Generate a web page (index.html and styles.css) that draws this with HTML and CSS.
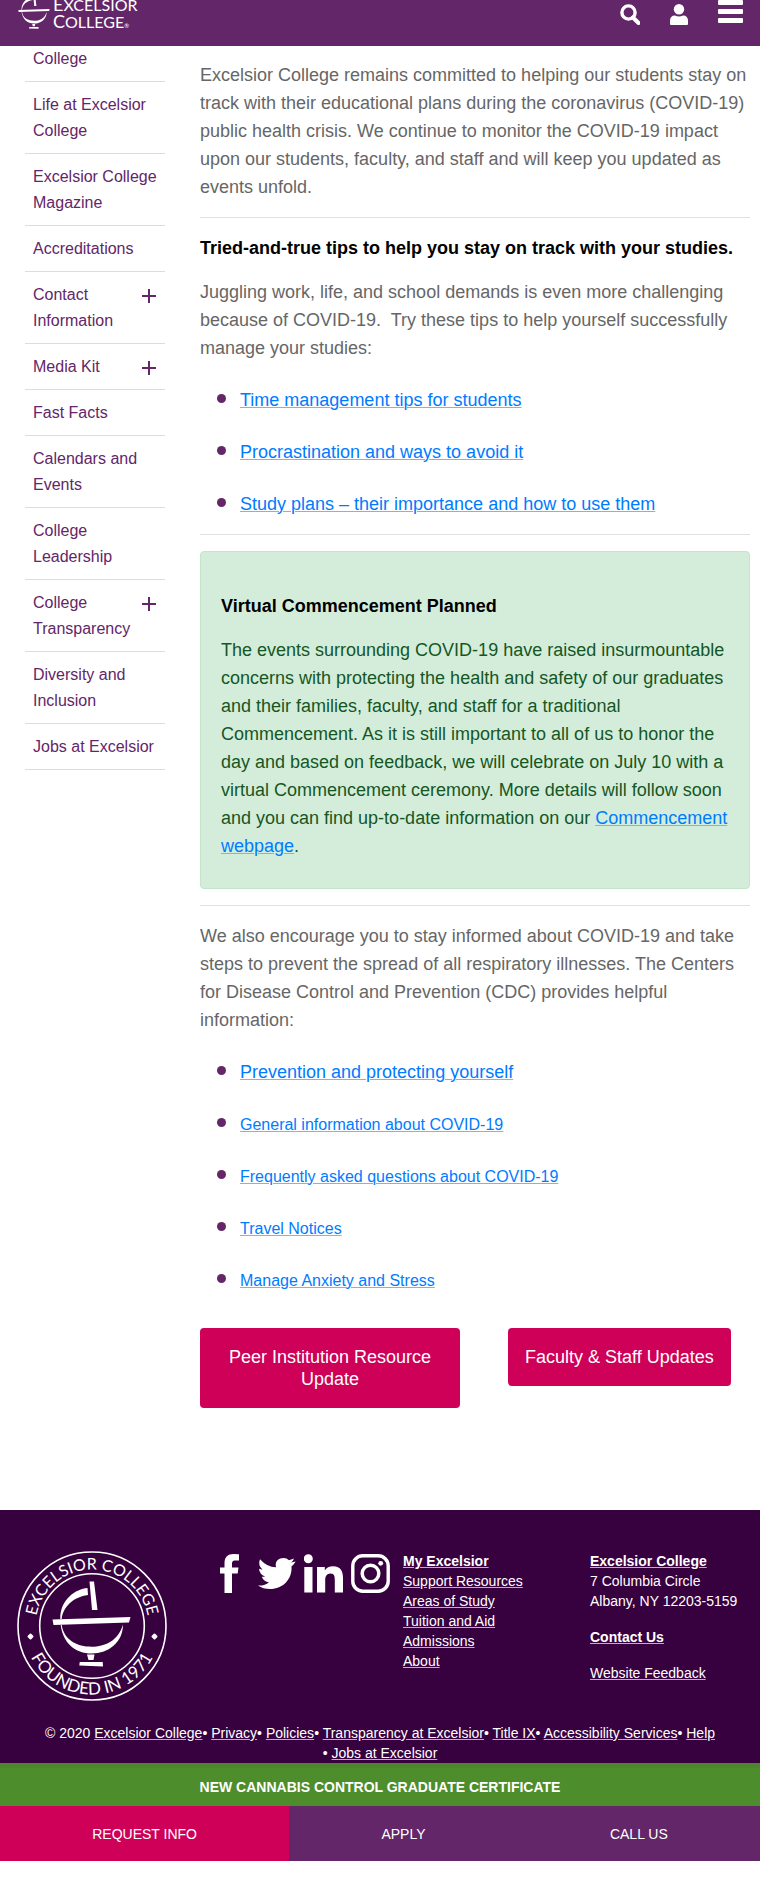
FILE: index.html
```html
<!DOCTYPE html>
<html lang="en">
<head>
<meta charset="utf-8">
<meta name="viewport" content="width=device-width, initial-scale=1">
<title>COVID-19 Updates | Excelsior College</title>
<link rel="stylesheet" href="styles.css">
</head>
<body>
<svg class="defs" width="0" height="0" aria-hidden="true">
  <symbol id="lamp" viewBox="35 29 79 87">
    <path d="M72.500 30.500L77 30.500L80.500 59L75 59ZM35.500 68.500L113.500 66L112 71.500L36.500 74ZM70.500 37C59 38 43 48 43.300 68L44.700 68C46 56 56 46 71 44ZM43.700 74C46 92 58 102.500 74.700 102.500C92 102.500 106 91 106 73.500C101 90 88 95.700 74.700 95.700C60 95.700 47 89 44.700 74ZM70 103.500H77.500L76.500 109H71.500ZM62.700 111H85.700L86 115.500L62.300 114.500Z"/>
  </symbol>
</svg>

<header class="topbar">
  <a class="logo" href="#" aria-label="Excelsior College home">
    <svg width="126" height="32" viewBox="0 0 126 32">
      <use href="#lamp" x="3" y="-6" width="32" height="35"/>
      <text class="logo-text" x="38" y="11"><tspan class="cap">E</tspan>XCELSIOR</text>
      <text class="logo-text" x="38" y="28"><tspan class="cap">C</tspan>OLLEGE<tspan class="reg">®</tspan></text>
    </svg>
  </a>
  <div class="tools">
    <button type="button" aria-label="Search">
      <svg width="20" height="21" viewBox="0 0 20 21" fill="none" stroke="#fff"><circle cx="8.500" cy="8.500" r="6.600" stroke-width="3.400"/><path d="M13 13.500L18.500 19" stroke-width="4" stroke-linecap="round"/></svg>
    </button>
    <button type="button" aria-label="Account">
      <svg width="18" height="21" viewBox="0 0 18 21" fill="#fff"><circle cx="9" cy="5.300" r="5.200"/><path d="M0 20V17Q0 11.500 5 11.500Q9 13.500 13 11.500Q18 11.500 18 17V20Q18 21 17 21H1Q0 21 0 20Z"/></svg>
    </button>
    <button type="button" class="menu" aria-label="Menu">
      <svg width="25" height="23" viewBox="0 0 25 23" fill="#fff"><rect width="25" height="5" rx="1"/><rect y="9" width="25" height="5" rx="1"/><rect y="18" width="25" height="5" rx="1"/></svg>
    </button>
  </div>
</header>

<div class="page">
  <nav class="side" aria-label="Section">
    <ul>
      <li><a href="#">College</a></li>
      <li><a href="#">Life at Excelsior College</a></li>
      <li><a href="#">Excelsior College Magazine</a></li>
      <li><a href="#">Accreditations</a></li>
      <li><a href="#">Contact Information</a><button type="button" class="plus" aria-label="Expand Contact Information"></button></li>
      <li><a href="#">Media Kit</a><button type="button" class="plus" aria-label="Expand Media Kit"></button></li>
      <li><a href="#">Fast Facts</a></li>
      <li><a href="#">Calendars and Events</a></li>
      <li><a href="#">College Leadership</a></li>
      <li><a href="#">College Transparency</a><button type="button" class="plus" aria-label="Expand College Transparency"></button></li>
      <li><a href="#">Diversity and Inclusion</a></li>
      <li><a href="#">Jobs at Excelsior</a></li>
    </ul>
  </nav>

  <main class="content">
    <p>Excelsior College remains committed to helping our students stay on track with their educational plans during the coronavirus (COVID-19) public health crisis. We continue to monitor the COVID-19 impact upon our students, faculty, and staff and will keep you updated as events unfold.</p>
    <hr>
    <h2>Tried-and-true tips to help you stay on track with your studies.</h2>
    <p>Juggling work, life, and school demands is even more challenging because of COVID-19.&nbsp; Try these tips to help yourself successfully manage your studies:</p>
    <ul class="links">
      <li><a href="#">Time management tips for students</a></li>
      <li><a href="#">Procrastination and ways to avoid it</a></li>
      <li><a href="#">Study plans – their importance and how to use them</a></li>
    </ul>
    <hr>
    <section class="notice">
      <h2>Virtual Commencement Planned</h2>
      <p>The events surrounding COVID-19 have raised insurmountable concerns with protecting the health and safety of our graduates and their families, faculty, and staff for a traditional Commencement. As it is still important to all of us to honor the day and based on feedback, we will celebrate on July 10 with a virtual Commencement ceremony. More details will follow soon and you can find up-to-date information on our <a href="#">Commencement webpage</a>.</p>
    </section>
    <hr>
    <p>We also encourage you to stay informed about COVID-19 and take steps to prevent the spread of all respiratory illnesses. The Centers for Disease Control and Prevention (CDC) provides helpful information:</p>
    <ul class="links">
      <li><a href="#">Prevention and protecting yourself</a></li>
      <li><a class="small" href="#">General information about COVID-19</a></li>
      <li><a class="small" href="#">Frequently asked questions about COVID-19</a></li>
      <li><a class="small" href="#">Travel Notices</a></li>
      <li><a class="small" href="#">Manage Anxiety and Stress</a></li>
    </ul>
    <div class="actions">
      <a class="btn wide" href="#">Peer Institution Resource Update</a>
      <a class="btn" href="#">Faculty &amp; Staff Updates</a>
    </div>
  </main>
</div>

<footer class="footer">
  <div class="cols">
    <svg class="seal" width="150" height="150" viewBox="0 0 150 150" role="img" aria-label="Excelsior College, founded in 1971">
      <defs>
        <path id="arcTop" d="M18.500 75A56.500 56.500 0 0 1 131.500 75"/>
        <path id="arcBottom" d="M6.500 75A68.500 68.500 0 0 0 143.500 75"/>
      </defs>
      <g fill="none" stroke="#fff" stroke-width="1.600"><circle cx="75" cy="75" r="74"/><circle cx="75" cy="75" r="52.300"/></g>
      <use href="#lamp" x="35" y="29" width="79" height="87" fill="#fff"/>
      <g class="seal-text">
        <text><textPath href="#arcTop" startOffset="50%">EXCELSIOR COLLEGE</textPath></text>
        <text class="founded"><textPath href="#arcBottom" startOffset="50%">FOUNDED IN 1971</textPath></text>
      </g>
      <path fill="#fff" d="M13.500 83.500L15.500 85.500L13.500 87.500L11.500 85.500ZM137.500 83.500L139.500 85.500L137.500 87.500L135.500 85.500Z" stroke="#fff" stroke-width="2" stroke-linejoin="round"/>
    </svg>
    <div class="social">
      <a href="#" aria-label="Facebook"><svg width="39" height="39" viewBox="-10 0 39 39"><path d="M19 .3V6.500H15.500C12.500 6.500 12 8 12 10V13.500H18.500L17.700 19.500H12V39H4.500V19.500H0V13.500H4.500V9C4.500 3 8 0 13.500 0Z"/></svg></a>
      <a href="#" aria-label="Twitter"><svg width="39" height="39" viewBox="-1 -4 39 39"><path d="M37 4.500Q35.500 7 33.500 8.200C34.500 21 25 31 12 31Q5 31 0 27.500Q6.500 28 11 24.200Q5.500 23.500 3.800 18.700H7.200Q1.500 16.500 1 10.800L4.500 11.700Q-.5 7 2 1.300Q9.500 9.500 18 9.300C16.500 3 21 0 25.500 0Q29 0 31 2.300L36 .5Q35.300 2.800 33 4.600L37.500 3.400Z"/></svg></a>
      <a href="#" aria-label="LinkedIn"><svg width="39" height="39" viewBox="0.500 0 39 39"><circle cx="4.800" cy="4.700" r="4.500"/><path d="M.8 13H9V38.500H.8ZM13.500 13H21.300V16.500Q24 12.300 29.500 12.300C37.500 12.300 39.500 17.500 39.500 24V38.500H31.300V26C31.300 22.500 31 19.500 27 19.500C23 19.500 21.700 22.500 21.700 26V38.500H13.500Z"/></svg></a>
      <a href="#" aria-label="Instagram"><svg width="39" height="39" viewBox="0 0 39 39"><g fill="none" stroke="#fff"><rect x="1.800" y="1.800" width="35.400" height="35.400" rx="10" stroke-width="3.400"/><circle cx="19.500" cy="19.500" r="8.300" stroke-width="3.500"/></g><circle cx="29.700" cy="9.300" r="2.400"/></svg></a>
    </div>
    <ul class="foot-links">
      <li><a class="strong" href="#">My Excelsior</a></li>
      <li><a href="#">Support Resources</a></li>
      <li><a href="#">Areas of Study</a></li>
      <li><a href="#">Tuition and Aid</a></li>
      <li><a href="#">Admissions</a></li>
      <li><a href="#">About</a></li>
    </ul>
    <address class="contact">
      <p><a class="strong" href="#">Excelsior College</a><br>7 Columbia Circle<br>Albany, NY 12203-5159</p>
      <p><a class="strong" href="#">Contact Us</a></p>
      <p><a href="#">Website Feedback</a></p>
    </address>
  </div>
  <p class="legal">© 2020 <a href="#">Excelsior College</a>• <a href="#">Privacy</a>• <a href="#">Policies</a>• <a href="#">Transparency at Excelsior</a>• <a href="#">Title IX</a>• <a href="#">Accessibility Services</a>• <a href="#">Help</a><br>• <a href="#">Jobs at Excelsior</a></p>
</footer>

<a class="promo" href="#">NEW CANNABIS CONTROL GRADUATE CERTIFICATE</a>
<nav class="cta" aria-label="Get started">
  <a class="request" href="#">REQUEST INFO</a>
  <a href="#">APPLY</a>
  <a href="#">CALL US</a>
</nav>
</body>
</html>
```
FILE: styles.css
```css
* { box-sizing: border-box; }
body {
  margin: 0;
  background: #fff;
  color: #666;
  font: 18px/28px "Liberation Sans", Arial, sans-serif;
}
ul { list-style: none; margin: 0; padding: 0; }
p, h2 { margin: 0; }
button { border: 0; padding: 0; background: none; cursor: pointer; }
svg { display: block; }
.defs { position: absolute; }

/* Header */
.topbar {
  display: flex;
  justify-content: space-between;
  align-items: flex-start;
  height: 46px;
  padding: 0 17px 0 15px;
  background: #632668;
}
.logo svg { fill: #fff; }
.logo-text { font: 16px Lato, sans-serif; }
.logo-text .cap { font-size: 18px; }
.logo-text .reg { font-size: 6px; }
.tools { display: flex; gap: 30px; padding-top: 4px; }
.tools .menu { margin-top: -4px; align-self: flex-start; }

/* Page columns */
.page {
  display: grid;
  grid-template-columns: 140px minmax(0, 1fr);
  gap: 35px;
  padding: 0 10px 102px 25px;
}

/* Side navigation */
.side li {
  display: flex;
  justify-content: space-between;
  align-items: flex-start;
  padding: 10px 8px 9px;
  border-bottom: 1px solid #ddd;
  font-size: 16px;
  line-height: 26px;
}
.side li:first-child { padding-top: 0; }
.side a { color: #632668; text-decoration: none; }
.plus {
  flex: none;
  width: 16px;
  height: 14px;
  margin-top: 7px;
  background:
    linear-gradient(#632668, #632668) center / 14px 2px no-repeat,
    linear-gradient(#632668, #632668) center / 2px 14px no-repeat;
}

/* Article */
.content { padding-top: 15px; }
.content h2 {
  margin-bottom: 16px;
  color: #000;
  font-size: 18px;
  line-height: 28px;
}
.content hr {
  margin: 16px 0;
  border: 0;
  border-top: 1px solid #e0e0e0;
}
.content p a, .links a {
  color: #007bff;
  text-decoration: underline;
  text-decoration-color: #aaa;
  text-decoration-thickness: 1px;
}
.links {
  display: grid;
  gap: 24px;
  margin-top: 24px;
}
.links li { height: 28px; padding-left: 17px; }
.links li::before {
  content: "";
  display: inline-block;
  width: 9px;
  height: 9px;
  margin-right: 14px;
  border-radius: 50%;
  background: #632668;
  vertical-align: 3px;
}
.links .small { font-size: 16px; }
.notice {
  padding: 40px 20px 28px;
  border: 1px solid #c3e6cb;
  border-radius: 4px;
  background: #d4edda;
  color: #155724;
}
.actions {
  display: flex;
  align-items: flex-start;
  gap: 48px;
  margin-top: 34px;
}
.btn {
  padding: 18px 17px;
  border-radius: 4px;
  background: #ce0058;
  color: #fff;
  line-height: 22px;
  text-align: center;
  text-decoration: none;
}
.btn.wide { flex: 0 1 260px; }

/* Footer */
.footer {
  padding: 41px 17px 0;
  background: #37003f;
  color: #fff;
  font-size: 14px;
  line-height: 20px;
}
.footer a { color: #fff; text-decoration-color: #b5b5b5; }
.footer .strong { font-weight: bold; }
.cols {
  display: grid;
  grid-template-columns: 193fr 193fr 187fr 153fr;
}
.seal-text {
  fill: #fff;
  font: 16px Lato, sans-serif;
  text-anchor: middle;
}
.seal-text .founded { font-size: 17px; }
.social {
  display: flex;
  align-self: start;
  gap: 8px;
  padding-top: 3px;
  fill: #fff;
}
.contact { display: grid; gap: 16px; align-content: start; font-style: normal; }
.legal { padding-top: 22px; text-align: center; }

/* Bottom bars */
.promo {
  display: block;
  padding: 5px 0;
  border-top: 5px solid #4a862b;
  background: #4d8d2b;
  color: #fff;
  font-size: 14px;
  font-weight: bold;
  text-align: center;
  text-decoration: none;
}
.cta { display: flex; background: #632668; }
.cta a {
  flex: 1 1 auto;
  padding: 14px 0 13px;
  color: #fff;
  font-size: 14px;
  text-align: center;
  text-decoration: none;
}
.cta .request { background: #ce0058; }
```
